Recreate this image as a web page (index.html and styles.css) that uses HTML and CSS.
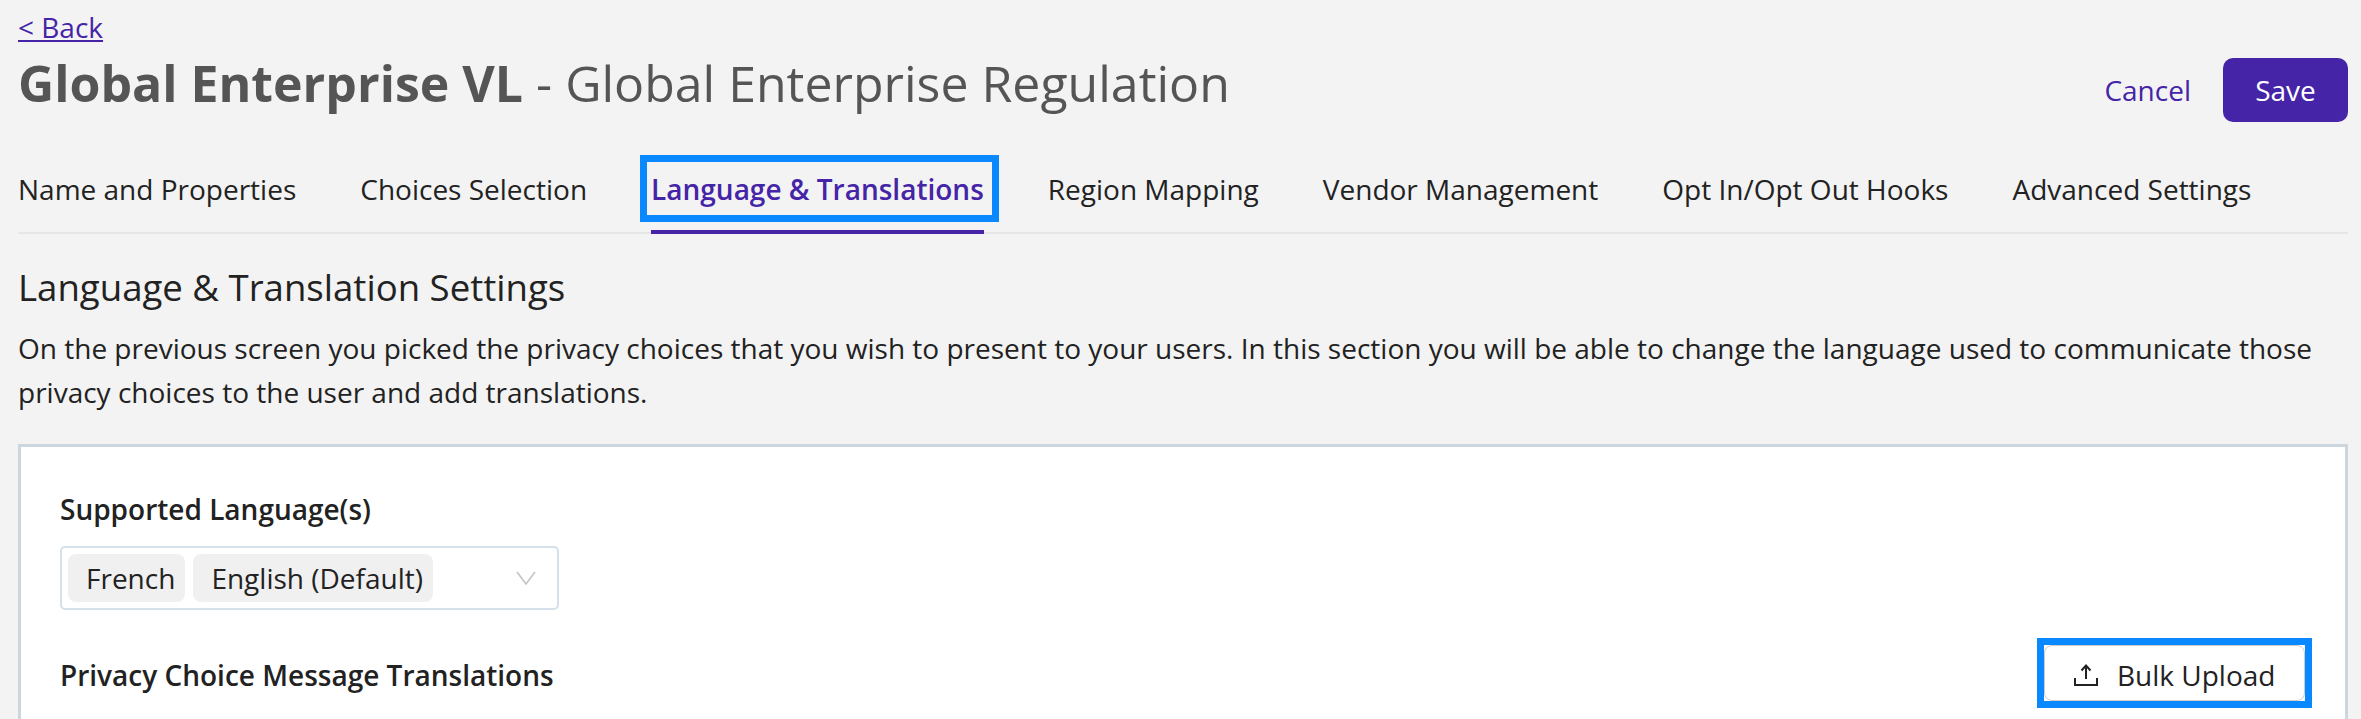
FILE: index.html
```html
<!DOCTYPE html>
<html lang="en">
<head>
  <meta charset="UTF-8">
  <title>Global Enterprise VL</title>
  <link rel="stylesheet" href="styles.css">
</head>
<body>

  <div class="page">
    <a class="back-link" href="#">&lt; Back</a>

    <div class="title-row">
      <h1 class="page-title"><strong>Global Enterprise VL</strong> - Global Enterprise Regulation</h1>
      <div class="title-actions">
        <a class="cancel-link" href="#">Cancel</a>
        <button class="save-button">Save</button>
      </div>
    </div>

    <div class="tabs">
      <a class="tab" href="#">Name and Properties</a>
      <a class="tab" href="#">Choices Selection</a>
      <a class="tab tab-active" href="#">Language &amp; Translations</a>
      <a class="tab" href="#">Region Mapping</a>
      <a class="tab" href="#">Vendor Management</a>
      <a class="tab" href="#">Opt In/Opt Out Hooks</a>
      <a class="tab" href="#">Advanced Settings</a>
    </div>

    <h2 class="section-title">Language &amp; Translation Settings</h2>
    <p class="section-text">On the previous screen you picked the privacy choices that you wish to present to your users. In this section you will be able to change the language used to communicate those privacy choices to the user and add translations.</p>

    <div class="card">
      <div class="field-label">Supported Language(s)</div>
      <div class="select-box">
        <span class="tag">French</span>
        <span class="tag">English (Default)</span>
        <svg class="chevron" width="20" height="14" viewBox="0 0 20 14"><path d="M1 1l9 12 9-12" fill="none" stroke="#c4c4c4" stroke-width="1.6"/></svg>
      </div>

      <div class="translations-row">
        <div class="field-label translations-label">Privacy Choice Message Translations</div>
        <button class="upload-button">
          <svg width="24" height="22" viewBox="0 0 24 22"><path d="M12 15V2M7.500 6.500L12 1.500l4.500 5M1 14v7h22v-7" fill="none" stroke="#222" stroke-width="2"/></svg>
          Bulk Upload
        </button>
      </div>
    </div>
  </div>

</body>
</html>
```

FILE: styles.css
```css
body {
  font-family: 'Open Sans', sans-serif;
  font-size: 28px;
  color: #222;
  background-color: #f3f3f3;
  margin: 0;
}
.page {
  display: flex;
  flex-direction: column;
  height: 100vh;
  padding: 10px 13px 0 18px;
  box-sizing: border-box;
}
.back-link {
  display: block;
  width: fit-content;
  line-height: 34px;
  color: #4524a8;
}
.title-row {
  display: flex;
  justify-content: space-between;
  height: 78px;
}
.page-title {
  margin: 0;
  font-size: 50px;
  font-weight: 400;
  line-height: 78px;
  color: #555;
}
.page-title strong {
  font-weight: 700;
}
.title-actions {
  display: flex;
  align-items: center;
  gap: 32px;
  padding-top: 14px;
}
.cancel-link {
  color: #4524a8;
  text-decoration: none;
}
.save-button {
  width: 125px;
  height: 64px;
  background-color: #4524a8;
  color: white;
  font-family: inherit;
  font-size: 28px;
  border: none;
  border-radius: 10px;
}
.tabs {
  display: flex;
  gap: 64px;
  height: 112px;
  border-bottom: 2px solid #e6e6e6;
  box-sizing: border-box;
}
.tab {
  position: relative;
  height: 112px;
  box-sizing: border-box;
  padding-top: 50px;
  line-height: 34px;
  color: #222;
  text-decoration: none;
}
.tab-active {
  font-weight: 600;
  color: #4524a8;
  border-bottom: 4px solid #4524a8;
}
/* annotation boxes drawn over the screenshot */
.tab-active::after,
.upload-button::after {
  content: "";
  position: absolute;
  box-sizing: border-box;
  border: 7px solid #0a88ff;
}
.tab-active::after {
  top: 33px;
  left: -11px;
  right: -15px;
  height: 67px;
}
.section-title {
  margin: 31px 0 0;
  font-size: 36.6px;
  font-weight: 500;
  line-height: 44px;
}
.section-text {
  margin: 17px 0 0;
  line-height: 44px;
}
.card {
  flex: 1;
  margin-top: 30px;
  padding: 45px 33px 0 39px;
  background: white;
  border: 3px solid #ccd6de;
  border-bottom: none;
}
.field-label {
  font-weight: 600;
  line-height: 34px;
}
.translations-label {
  margin-top: 4px;
}
.select-box {
  display: flex;
  align-items: center;
  gap: 8px;
  position: relative;
  width: 499px;
  height: 64px;
  margin-top: 20px;
  padding: 0 6px;
  box-sizing: border-box;
  border: 2px solid #d5e0ea;
  border-radius: 5px;
}
.tag {
  height: 48px;
  padding: 0 10px 0 18px;
  line-height: 48px;
  background-color: #f0f0f0;
  border-radius: 8px;
}
.chevron {
  position: absolute;
  right: 21px;
  top: 23px;
}
.translations-row {
  display: flex;
  justify-content: space-between;
  align-items: center;
  height: 70px;
  margin-top: 28px;
}
.upload-button {
  display: flex;
  align-items: center;
  gap: 19px;
  position: relative;
  width: 261px;
  height: 56px;
  margin: 7px;
  padding: 3px 0 0 29px;
  box-sizing: border-box;
  font-family: inherit;
  font-size: 28px;
  color: #222;
  background: white;
  border: 1px solid #ccc;
  border-radius: 8px;
}
.upload-button::after {
  top: -8px;
  right: -8px;
  bottom: -8px;
  left: -8px;
}
```
